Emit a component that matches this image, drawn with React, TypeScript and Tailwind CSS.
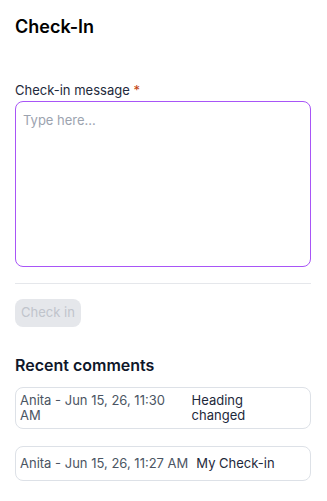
export default function App() {
  const comments = [
    { meta: "Anita - Jun 15, 26, 11:30 AM", text: "Heading changed" },
    { meta: "Anita - Jun 15, 26, 11:27 AM", text: "My Check-in" },
  ];

  return (
    <div
      className="w-[327px] min-h-[501px] bg-white pl-[15px] pr-4 pt-[15px]"
      style={{ fontFamily: "Inter, 'Noto Sans', sans-serif" }}
    >
      <h1 className="text-[18px] leading-[24px] font-semibold text-black">Check-In</h1>

      <div className="mt-[42px]">
        <label className="block text-[13px] leading-[18px] text-[#1e293b]">
          Check-in message <span className="text-[#c2410c]">*</span>
        </label>
        <textarea
          placeholder="Type here..."
          className="mt-[2px] block w-full h-[166px] resize-none rounded-lg border border-[#a855f7] px-[7px] py-[9px] text-[13px] leading-[18px] placeholder:text-[#9ca3af] outline-none"
        />
      </div>

      <div className="mt-4 border-t border-[#e5e7eb]" />

      <button
        disabled
        className="mt-[15px] h-[28px] rounded-lg bg-[#e5e7eb] px-[6px] text-[13px] text-[#c0c4cb]"
      >
        Check in
      </button>

      <h2 className="mt-[28px] text-[16px] leading-[20px] font-semibold text-[#0f172a]">
        Recent comments
      </h2>

      <div className="mt-[12px] flex flex-col gap-[17px]">
        {comments.map((c, i) => (
          <div
            key={i}
            className="flex items-center min-h-[35px] rounded-lg border border-[#dde1e7] py-[5px] text-[13px] leading-[15px]"
          >
            <table className="table-auto border-collapse">
              <tbody>
                <tr>
                  <td className="px-1 align-middle text-[#4b5563]">{c.meta}</td>
                  <td className="pl-1 pr-3 align-middle text-[#1e293b]">{c.text}</td>
                </tr>
              </tbody>
            </table>
          </div>
        ))}
      </div>
    </div>
  );
}
